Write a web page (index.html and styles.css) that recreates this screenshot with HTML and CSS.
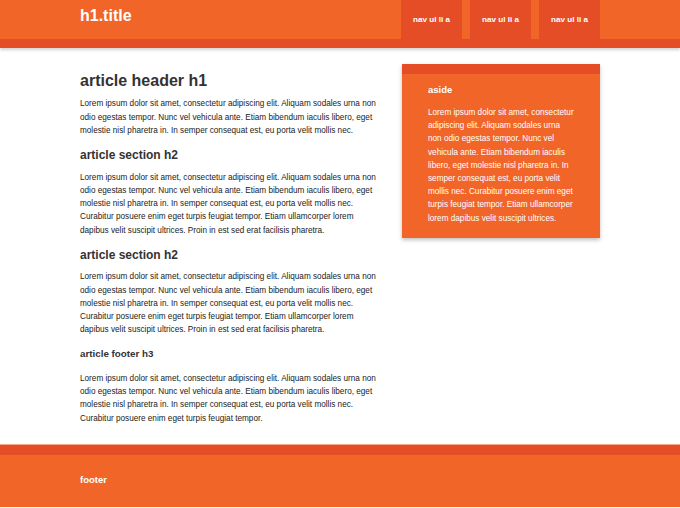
FILE: index.html
```html
<!DOCTYPE html>
<html lang="en">
<head>
<meta charset="utf-8">
<title>h1.title</title>
<link rel="stylesheet" href="styles.css">
</head>
<body>
<header class="header">
  <div class="wrap header-inner">
    <h1 class="title">h1.title</h1>
    <nav class="nav">
      <ul class="nav-list">
        <li class="nav-item"><a class="nav-link" href="#">nav ul li a</a></li>
        <li class="nav-item"><a class="nav-link" href="#">nav ul li a</a></li>
        <li class="nav-item"><a class="nav-link" href="#">nav ul li a</a></li>
      </ul>
    </nav>
  </div>
</header>
<main class="wrap main">
  <article class="article">
    <h1 class="article-h1">article header h1</h1>
    <p class="text">Lorem ipsum dolor sit amet, consectetur adipiscing elit. Aliquam sodales urna non odio egestas tempor. Nunc vel vehicula ante. Etiam bibendum iaculis libero, eget molestie nisl pharetra in. In semper consequat est, eu porta velit mollis nec.</p>
    <h2 class="article-h2">article section h2</h2>
    <p class="text">Lorem ipsum dolor sit amet, consectetur adipiscing elit. Aliquam sodales urna non odio egestas tempor. Nunc vel vehicula ante. Etiam bibendum iaculis libero, eget molestie nisl pharetra in. In semper consequat est, eu porta velit mollis nec. Curabitur posuere enim eget turpis feugiat tempor. Etiam ullamcorper lorem dapibus velit suscipit ultrices. Proin in est sed erat facilisis pharetra.</p>
    <h2 class="article-h2">article section h2</h2>
    <p class="text">Lorem ipsum dolor sit amet, consectetur adipiscing elit. Aliquam sodales urna non odio egestas tempor. Nunc vel vehicula ante. Etiam bibendum iaculis libero, eget molestie nisl pharetra in. In semper consequat est, eu porta velit mollis nec. Curabitur posuere enim eget turpis feugiat tempor. Etiam ullamcorper lorem dapibus velit suscipit ultrices. Proin in est sed erat facilisis pharetra.</p>
    <h3 class="article-h3">article footer h3</h3>
    <p class="text">Lorem ipsum dolor sit amet, consectetur adipiscing elit. Aliquam sodales urna non odio egestas tempor. Nunc vel vehicula ante. Etiam bibendum iaculis libero, eget molestie nisl pharetra in. In semper consequat est, eu porta velit mollis nec. Curabitur posuere enim eget turpis feugiat tempor.</p>
  </article>
  <aside class="aside">
    <h3 class="aside-title">aside</h3>
    <p class="aside-text">Lorem ipsum dolor sit amet, consectetur adipiscing elit. Aliquam sodales urna non odio egestas tempor. Nunc vel vehicula ante. Etiam bibendum iaculis libero, eget molestie nisl pharetra in. In semper consequat est, eu porta velit mollis nec. Curabitur posuere enim eget turpis feugiat tempor. Etiam ullamcorper lorem dapibus velit suscipit ultrices.</p>
  </aside>
</main>
<footer class="footer">
  <div class="wrap">
    <h3 class="footer-title">footer</h3>
  </div>
</footer>
</body>
</html>
```
FILE: styles.css
```css
* { box-sizing: border-box; }

html, body {
  margin: 0;
  padding: 0;
  background: #ffffff;
}

body {
  font-family: "Liberation Sans", Arial, Helvetica, sans-serif;
  font-size: 8.2px;
  line-height: 13.2px;
  color: #222222;
  height: 508px;
  overflow: hidden;
}

.wrap {
  width: 520px;
  margin: 0 auto;
}

/* Header */
.header {
  background: #f16529;
  border-bottom: 9px solid #e44d26;
  box-shadow: 0 2px 3px rgba(0, 0, 0, 0.18);
}

.header-inner {
  display: flex;
  justify-content: space-between;
  align-items: flex-start;
  height: 39px;
}

.title {
  margin: 0;
  padding-top: 6px;
  font-size: 16px;
  line-height: 20px;
  font-weight: bold;
  color: #ffffff;
}

.nav-list {
  display: flex;
  gap: 8px;
  list-style: none;
  margin: 0;
  padding: 0;
}

.nav-link {
  display: block;
  width: 61px;
  height: 39px;
  line-height: 39px;
  text-align: center;
  background: #e44d26;
  color: #ffffff;
  font-weight: bold;
  font-size: 8.1px;
  text-decoration: none;
}

/* Main */
.main {
  display: flex;
  justify-content: space-between;
  align-items: flex-start;
  padding-top: 16px;
  height: 397px;
}

.article {
  width: 302px;
}

.article-h1 {
  margin: 7px 0 6.4px;
  font-size: 16px;
  line-height: 20px;
  font-weight: bold;
  color: #333333;
}

.article-h2 {
  margin: 11px 0 7.7px;
  font-size: 12px;
  line-height: 15px;
  font-weight: bold;
  color: #333333;
}

.article-h3 {
  margin: 12px 0 11.5px;
  font-size: 9.8px;
  line-height: 12px;
  font-weight: bold;
  color: #333333;
}

.text {
  margin: 0;
}

/* Aside */
.aside {
  width: 198px;
  background: #f16529;
  border-top: 10px solid #e44d26;
  padding: 10px 25px 13px 26px;
  color: #ffffff;
  box-shadow: 0 2px 4px rgba(0, 0, 0, 0.25);
}

.aside-title {
  margin: 0 0 10px;
  font-size: 9.5px;
  line-height: 12px;
  font-weight: bold;
}

.aside-text {
  margin: 0;
}

/* Footer */
.footer {
  background: #f16529;
  border-top: 10px solid #e44d26;
  box-shadow: 0 -1px 0 #f7a98a;
  padding: 19px 0 21px;
}

.footer-title {
  margin: 0;
  font-size: 9.5px;
  line-height: 12px;
  font-weight: bold;
  color: #ffffff;
}
```
